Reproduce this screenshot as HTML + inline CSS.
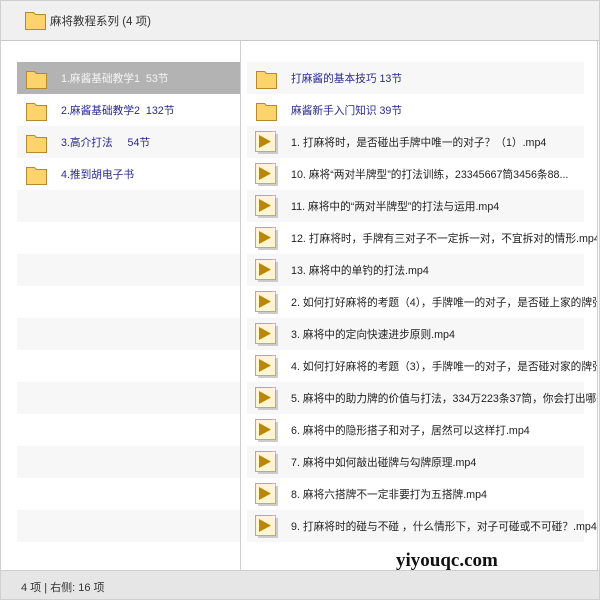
<!DOCTYPE html>
<html><head><meta charset="utf-8"><style>
*{margin:0;padding:0;box-sizing:border-box}
body{width:600px;height:600px;overflow:hidden;background:#fff;font-family:"Liberation Sans","Noto Sans CJK SC",sans-serif;font-size:10.7px;position:relative}
.frame{position:absolute;inset:0;border:1px solid #cfcfcf;z-index:6}
.hdr{position:absolute;left:0;top:0;width:600px;height:41px;background:#f0f0f0;border-bottom:1px solid #c8c8c8}
.hdr span{position:absolute;left:50px;top:13px;color:#333;font-size:11.5px}
.split{position:absolute;left:240px;top:41px;width:1px;height:529px;background:#cfcfcf}
.row{position:absolute;height:32px;white-space:nowrap}
.row .t{position:absolute;top:9px}
.alt{background:#f7f7f7}
.sel{background:#b3b3b3}
.fold{position:absolute;width:23px;height:21px}
.vid{position:absolute;width:23px;height:23px}
.ftr{position:absolute;left:0;top:570px;width:600px;height:30px;background:#e6e6e6;border-top:1px solid #cfcfcf}
.ftr span{position:absolute;left:21px;top:8px;color:#333;font-size:11px}
.wm{position:absolute;left:396px;top:550px;font-family:"Liberation Serif",serif;font-weight:bold;font-size:19px;color:#111;z-index:5;line-height:22px}
.blue{color:#2a2a90}
.blk{color:#222}
.rp{position:absolute;left:241px;top:41px;width:356px;height:529px;overflow:hidden}
</style></head><body>
<svg width="0" height="0" style="position:absolute"><defs>
<g id="f"><path d="M1.5 3.5h8l2 2h10v15h-20z" fill="#fcd36c" stroke="#b58a2e"/><path d="M21.5 6v15h-19" fill="none" stroke="#b58a2e" opacity=".5"/></g>
<g id="v"><rect x="3" y="3" width="20" height="20" fill="#ccc"/><rect x="0.5" y="0.5" width="20" height="20" fill="#fff4d6" stroke="#e0a92a"/><path d="M4 4l12 6.5L4 17z" fill="#b8860b"/><path d="M17 .5h3.5v3.5" fill="#fff" stroke="#e0a92a" stroke-width=".6"/></g>
</defs></svg>
<div class="hdr"><svg class="fold" style="left:24px;top:9px"><use href="#f"/></svg><span>麻将教程系列 (4 项)</span></div>

<div class="row sel" style="left:17px;top:62px;width:223px"><svg class="fold" style="left:8px;top:6px"><use href="#f"/></svg><span class="t" style="left:44px;color:#f4f4f4">1.麻酱基础教学1&nbsp;&nbsp;53节</span></div>
<div class="row" style="left:17px;top:94px;width:223px"><svg class="fold" style="left:8px;top:6px"><use href="#f"/></svg><span class="t blue" style="left:44px">2.麻酱基础教学2&nbsp;&nbsp;132节</span></div>
<div class="row alt" style="left:17px;top:126px;width:223px"><svg class="fold" style="left:8px;top:6px"><use href="#f"/></svg><span class="t blue" style="left:44px">3.高介打法&nbsp;&nbsp;&nbsp;&nbsp;&nbsp;54节</span></div>
<div class="row" style="left:17px;top:158px;width:223px"><svg class="fold" style="left:8px;top:6px"><use href="#f"/></svg><span class="t blue" style="left:44px">4.推到胡电子书</span></div>
<div class="row alt" style="left:17px;top:190px;width:223px"></div>
<div class="row alt" style="left:17px;top:254px;width:223px"></div>
<div class="row alt" style="left:17px;top:318px;width:223px"></div>
<div class="row alt" style="left:17px;top:382px;width:223px"></div>
<div class="row alt" style="left:17px;top:446px;width:223px"></div>
<div class="row alt" style="left:17px;top:510px;width:223px"></div>
<div class="split"></div>

<div class="rp">
<div class="row alt" style="left:6px;top:21px;width:337px"><svg class="fold" style="left:8px;top:6px"><use href="#f"/></svg><span class="t blue" style="left:44px">打麻酱的基本技巧 13节</span></div>
<div class="row" style="left:6px;top:53px;width:337px"><svg class="fold" style="left:8px;top:6px"><use href="#f"/></svg><span class="t blue" style="left:44px">麻酱新手入门知识 39节</span></div>
<div class="row alt" style="left:6px;top:85px;width:337px"><svg class="vid" style="left:8px;top:5px"><use href="#v"/></svg><span class="t blk" style="left:44px">1. 打麻将时，是否碰出手牌中唯一的对子？（1）.mp4</span></div>
<div class="row" style="left:6px;top:117px;width:337px"><svg class="vid" style="left:8px;top:5px"><use href="#v"/></svg><span class="t blk" style="left:44px">10. 麻将“两对半牌型”的打法训练，23345667筒3456条88...</span></div>
<div class="row alt" style="left:6px;top:149px;width:337px"><svg class="vid" style="left:8px;top:5px"><use href="#v"/></svg><span class="t blk" style="left:44px">11. 麻将中的“两对半牌型”的打法与运用.mp4</span></div>
<div class="row" style="left:6px;top:181px;width:337px"><svg class="vid" style="left:8px;top:5px"><use href="#v"/></svg><span class="t blk" style="left:44px">12. 打麻将时，手牌有三对子不一定拆一对，不宜拆对的情形.mp4</span></div>
<div class="row alt" style="left:6px;top:213px;width:337px"><svg class="vid" style="left:8px;top:5px"><use href="#v"/></svg><span class="t blk" style="left:44px">13. 麻将中的单钓的打法.mp4</span></div>
<div class="row" style="left:6px;top:245px;width:337px"><svg class="vid" style="left:8px;top:5px"><use href="#v"/></svg><span class="t blk" style="left:44px">2. 如何打好麻将的考题（4），手牌唯一的对子，是否碰上家的牌张</span></div>
<div class="row alt" style="left:6px;top:277px;width:337px"><svg class="vid" style="left:8px;top:5px"><use href="#v"/></svg><span class="t blk" style="left:44px">3. 麻将中的定向快速进步原则.mp4</span></div>
<div class="row" style="left:6px;top:309px;width:337px"><svg class="vid" style="left:8px;top:5px"><use href="#v"/></svg><span class="t blk" style="left:44px">4. 如何打好麻将的考题（3），手牌唯一的对子，是否碰对家的牌张</span></div>
<div class="row alt" style="left:6px;top:341px;width:337px"><svg class="vid" style="left:8px;top:5px"><use href="#v"/></svg><span class="t blk" style="left:44px">5. 麻将中的助力牌的价值与打法，334万223条37筒，你会打出哪一张</span></div>
<div class="row" style="left:6px;top:373px;width:337px"><svg class="vid" style="left:8px;top:5px"><use href="#v"/></svg><span class="t blk" style="left:44px">6. 麻将中的隐形搭子和对子，居然可以这样打.mp4</span></div>
<div class="row alt" style="left:6px;top:405px;width:337px"><svg class="vid" style="left:8px;top:5px"><use href="#v"/></svg><span class="t blk" style="left:44px">7. 麻将中如何敲出碰牌与勾牌原理.mp4</span></div>
<div class="row" style="left:6px;top:437px;width:337px"><svg class="vid" style="left:8px;top:5px"><use href="#v"/></svg><span class="t blk" style="left:44px">8. 麻将六搭牌不一定非要打为五搭牌.mp4</span></div>
<div class="row alt" style="left:6px;top:469px;width:337px"><svg class="vid" style="left:8px;top:5px"><use href="#v"/></svg><span class="t blk" style="left:44px">9. 打麻将时的碰与不碰 ，什么情形下，对子可碰或不可碰？.mp4</span></div>
</div>
<div style="position:absolute;left:597px;top:41px;width:1px;height:529px;background:#cfcfcf"></div>
<div class="ftr"><span>4 项 | 右侧: 16 项</span></div>
<div class="wm">yiyouqc.com</div>
<div class="frame"></div>
</body></html>
